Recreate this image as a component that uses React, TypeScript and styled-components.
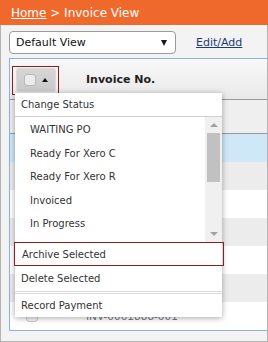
import styled, { createGlobalStyle } from 'styled-components'

const GlobalStyle = createGlobalStyle`
  html, body {
    margin: 0;
    padding: 0;
    background: #ffffff;
  }

  body {
    font-family: 'DejaVu Sans', Verdana, sans-serif;
  }
`

const Page = styled.div`
  display: flex;
  flex-direction: column;

  width: 268px;
  height: 342px;
`

const Header = styled.div`
  display: flex;
  align-items: center;

  padding-left: 11px;

  height: 25px;

  font-size: 12px;
  color: #ffffff;

  background: #ef692c;
`

const HomeLink = styled.a`
  color: #ffffff;
  text-decoration: underline;
`

const Crumb = styled.span`
  white-space: pre;
`

const Body = styled.div`
  display: flex;
  flex-direction: column;

  box-sizing: border-box;
  flex: 1;

  padding: 6px 0 0 8px;

  border: 1px solid #b3b3b3;
  border-top: none;

  overflow: hidden;

  background: #f3f3f3;
`

const Toolbar = styled.div`
  display: flex;
  align-items: center;

  height: 23px;
`

const Select = styled.div`
  display: flex;
  align-items: center;
  justify-content: space-between;

  box-sizing: border-box;

  padding: 0 8px 0 6px;

  border: 1px solid #9a9a9a;
  border-radius: 4px;

  width: 167px;
  height: 23px;

  font-size: 11px;
  color: #111111;

  background: #ffffff;
`

const DownCaret = styled.span`
  border-left: 3px solid transparent;
  border-right: 3px solid transparent;
  border-top: 6px solid #1a1a1a;
`

const EditLink = styled.a`
  margin-left: 20px;

  font-size: 11px;
  color: #1d3b78;
  text-decoration: underline;
`

const Panel = styled.div`
  position: relative;

  box-sizing: border-box;

  margin-top: 4px;

  border: 1px solid #8fb0e2;

  width: 259px;
  height: 273px;

  background: #ffffff;
`

const HeadRow = styled.div`
  display: flex;
  align-items: flex-start;

  box-sizing: border-box;

  padding: 7px 0 0 2px;

  border-bottom: 1px solid #999999;

  height: 41px;

  background: linear-gradient(#f8f8f8, #e9e9e9);
`

const FocusRing = styled.div`
  padding: 1px 2px 2px 3px;

  border: 1px solid #8e1c1c;
`

const SelectButton = styled.div`
  display: flex;
  align-items: center;
  gap: 6px;

  box-sizing: border-box;

  padding-left: 7px;

  border: 1px solid #dcdcdc;
  border-radius: 2px;

  width: 40px;
  height: 24px;

  background: linear-gradient(#d6d6d6, #cacaca);
`

const Check = styled.span<{ faint?: boolean }>`
  box-sizing: border-box;

  border: 1px solid ${(p) => (p.faint ? '#c8c8c8' : '#b8b8b8')};
  border-radius: 3px;

  width: 12px;
  height: 12px;

  background: ${(p) => (p.faint ? '#f4f4f4' : '#ececec')};
`

const UpCaret = styled.span`
  border-left: 3px solid transparent;
  border-right: 3px solid transparent;
  border-bottom: 4px solid #111111;
`

const HeadTitle = styled.span`
  margin: 7px 0 0 27px;

  font-size: 11px;
  font-weight: 700;
  color: #222222;
`

const FilterRow = styled.div`
  border-bottom: 1px solid #999999;

  height: 33px;

  background: #efefef;
`

const Row = styled.div<{ tone: 'selected' | 'alt' | 'plain' }>`
  display: flex;
  align-items: center;

  box-sizing: border-box;

  padding-left: 16px;

  height: 28px;

  background: ${(p) =>
    p.tone === 'selected' ? '#cfe8f7' : p.tone === 'alt' ? '#ececec' : '#ffffff'};
`

const InvoiceNo = styled.span`
  margin-left: 48px;

  font-size: 10.5px;
  color: #7a7a86;
`

const Menu = styled.div`
  position: absolute;
  left: 5px;
  top: 34px;

  display: flex;
  flex-direction: column;

  width: 207px;
  height: 224px;

  background: #ffffff;
  box-shadow: 0 1px 6px rgba(0, 0, 0, 0.35);
`

const MenuItem = styled.div<{ focused?: boolean; rule?: 'top' | 'bottom' }>`
  display: flex;
  align-items: center;

  box-sizing: border-box;

  height: ${(p) => (p.rule === 'bottom' ? '26px' : '24px')};
  margin: ${(p) => (p.focused ? '0 -2px 0 -1px' : p.rule === 'top' ? '1px 0 0' : '0')};
  padding-left: ${(p) => (p.focused ? '7px' : '6px')};

  border: ${(p) => (p.focused ? '1px solid #8e1c1c' : 'none')};
  border-bottom: ${(p) =>
    p.focused ? '1px solid #8e1c1c' : p.rule === 'bottom' ? '1px solid #dddddd' : 'none'};
  border-top: ${(p) =>
    p.focused ? '1px solid #8e1c1c' : p.rule === 'top' ? '1px solid #dddddd' : 'none'};

  font-size: 10px;
  color: #333333;
`

const StatusHead = styled.div`
  display: flex;
  align-items: center;

  padding-left: 6px;

  border-bottom: 1px solid #d0d0d0;

  height: 23px;

  font-size: 10px;
  color: #333333;
`

const ScrollArea = styled.div`
  display: flex;

  height: 125px;
`

const StatusList = styled.div`
  flex: 1;

  padding-top: 1px;

  overflow: hidden;
`

const StatusItem = styled.div`
  display: flex;
  align-items: center;

  padding-left: 15px;

  height: 23.5px;

  font-size: 10px;
  color: #333333;
`

const Scrollbar = styled.div`
  display: flex;
  flex-direction: column;

  width: 17px;

  background: #f0f0f0;
`

const ScrollArrow = styled.div<{ dir: 'up' | 'down' }>`
  display: flex;
  align-items: center;
  justify-content: center;

  height: 16px;

  &::after {
    content: '';
    border-left: 4px solid transparent;
    border-right: 4px solid transparent;
    ${(p) => (p.dir === 'up' ? 'border-bottom' : 'border-top')}: 4px solid #a3a3a3;
  }
`

const Track = styled.div`
  flex: 1;

  padding: 0 2px;
`

const Thumb = styled.div`
  height: 49px;

  background: #c1c1c1;
`

const statuses = ['WAITING PO', 'Ready For Xero C', 'Ready For Xero R', 'Invoiced', 'In Progress']

// only the last row shows below the open menu
const rows: Array<{ tone: 'selected' | 'alt' | 'plain'; invoice?: string }> = [
  { tone: 'selected' },
  { tone: 'alt' },
  { tone: 'plain' },
  { tone: 'alt' },
  { tone: 'plain' },
  { tone: 'alt' },
  { tone: 'plain', invoice: 'INV-0001888-001' },
]

export default function App() {
  return (
    <>
      <GlobalStyle />
      <Page>
        <Header>
          <HomeLink>Home</HomeLink>
          <Crumb> &gt; Invoice View</Crumb>
        </Header>
        <Body>
          <Toolbar>
            <Select>
              Default View
              <DownCaret />
            </Select>
            <EditLink>Edit/Add</EditLink>
          </Toolbar>
          <Panel>
            <HeadRow>
              <FocusRing>
                <SelectButton>
                  <Check />
                  <UpCaret />
                </SelectButton>
              </FocusRing>
              <HeadTitle>Invoice No.</HeadTitle>
            </HeadRow>
            <FilterRow />
            {rows.map((row, i) => (
              <Row key={i} tone={row.tone}>
                <Check faint />
                {row.invoice && <InvoiceNo>{row.invoice}</InvoiceNo>}
              </Row>
            ))}
            <Menu>
              <StatusHead>Change Status</StatusHead>
              <ScrollArea>
                <StatusList>
                  {statuses.map((s) => (
                    <StatusItem key={s}>{s}</StatusItem>
                  ))}
                </StatusList>
                <Scrollbar>
                  <ScrollArrow dir="up" />
                  <Track>
                    <Thumb />
                  </Track>
                  <ScrollArrow dir="down" />
                </Scrollbar>
              </ScrollArea>
              <MenuItem focused>Archive Selected</MenuItem>
              <MenuItem rule="bottom">Delete Selected</MenuItem>
              <MenuItem rule="top">Record Payment</MenuItem>
            </Menu>
          </Panel>
        </Body>
      </Page>
    </>
  )
}
